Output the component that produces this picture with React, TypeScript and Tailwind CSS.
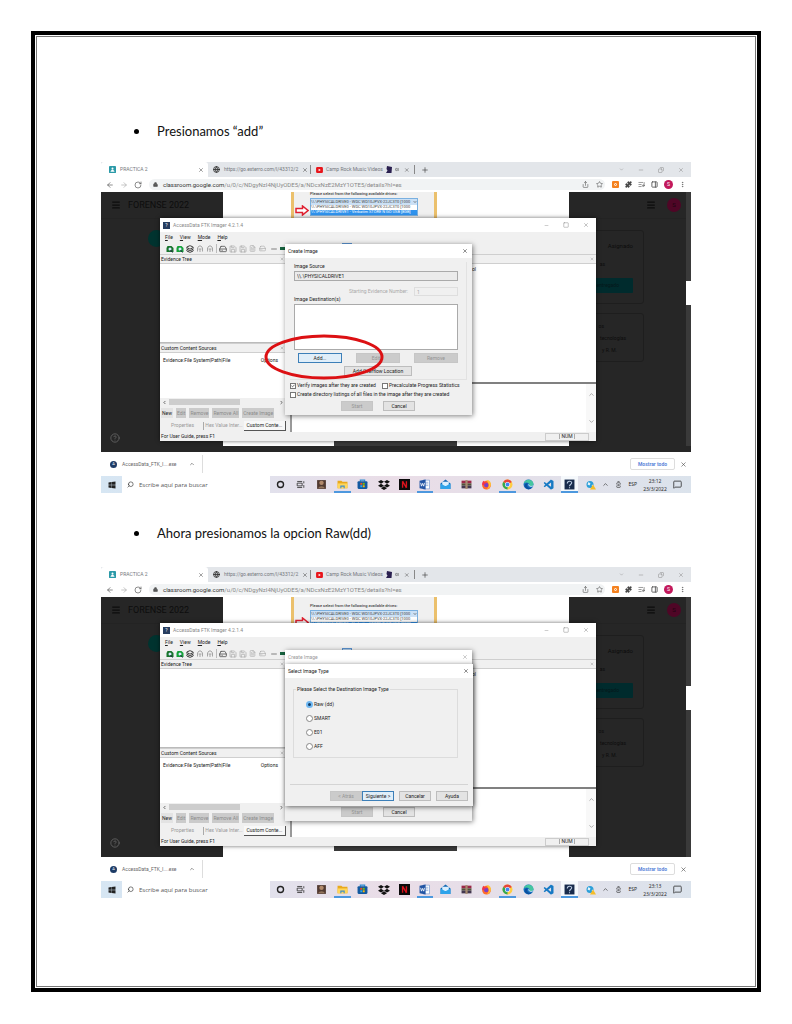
import React, { useId } from 'react';
import {
  ArrowLeft, ArrowRight, BatteryCharging, Check, ChevronDown, ChevronLeft, ChevronRight, ChevronUp,
  CircleHelp, Copy, FileText, Globe, HardDrive, Layers, ListMusic, Lock, Menu, MessageSquare, Minus,
  MoreVertical, PanelRight, Plus, Puzzle, RotateCw, Save, Search, Share, Square, Star, Volume2, X,
} from 'lucide-react';
import { FaDropbox, FaWindows } from 'react-icons/fa';
import { VscVscode } from 'react-icons/vsc';

type StepKind = 'create' | 'type';

function ClassroomIcon() {
  return (
    <svg viewBox="0 0 16 16" className="size-[7px] shrink-0">
      <rect width="16" height="16" rx="1" fill="#2b9aa8" />
      <circle cx="8" cy="6" r="2.3" fill="#fff" />
      <path d="M3.5 13c0-3 2-4 4.500-4s4.500 1 4.500 4z" fill="#fff" />
    </svg>
  );
}

function YoutubeIcon() {
  return (
    <svg viewBox="0 0 16 14" className="h-[6px] w-[7px] shrink-0">
      <rect width="16" height="14" rx="3" fill="#e8151b" />
      <path d="M6 4l5 3-5 3z" fill="#fff" />
    </svg>
  );
}

function ChromeTabs() {
  return (
    <div className="flex h-[15px] items-stretch bg-[#e3e6ea] text-[5px] leading-none text-[#74787d]">
      <div className="flex w-[107px] items-center gap-[4px] rounded-t-[3px] bg-white pl-[8px] pr-[4px]">
        <ClassroomIcon />
        <span className="flex-1">PRACTICA 2</span>
        <X className="size-[6px] text-[#444]" />
      </div>
      <div className="flex w-[102px] items-center gap-[4px] pl-[5px] pr-[3px]">
        <Globe className="size-[7px] shrink-0 text-[#333]" strokeWidth={3} />
        <span className="flex-1 whitespace-nowrap">https://go.exterro.com/l/43312/2</span>
        <X className="size-[6px] shrink-0 text-[#444]" />
      </div>
      <div className="my-[3px] w-px bg-[#888]" />
      <div className="flex w-[103px] items-center gap-[3px] pl-[5px] pr-[4px]">
        <YoutubeIcon />
        <span className="whitespace-nowrap">Camp Rock Music Videos</span>
        <svg viewBox="0 0 12 14" className="h-[7px] w-[6px] shrink-0">
          <path d="M2 0l10 2-1 12H0l3-5-2-3z" fill="#2a2050" />
        </svg>
        <Volume2 className="ml-auto size-[5px] text-[#333]" />
        <X className="ml-[2px] size-[6px] text-[#444]" />
      </div>
      <div className="my-[3px] w-px bg-[#888]" />
      <Plus className="ml-[6px] size-[8px] self-center text-[#444]" />
      <div className="ml-auto flex items-center gap-[14px] pr-[7px] text-[#8b8b8b]">
        <ChevronDown className="size-[5px]" />
        <Minus className="size-[6px]" />
        <Copy className="size-[6px] -scale-x-100" />
        <X className="size-[6px]" />
      </div>
    </div>
  );
}

function ChromeToolbar() {
  return (
    <div className="flex h-[15px] items-center bg-white px-[5px] text-[#555]">
      <div className="flex w-[43px] items-center gap-[6px]">
        <ArrowLeft className="size-[8px]" />
        <ArrowRight className="size-[8px] text-[#aaa]" />
        <RotateCw className="size-[8px]" />
      </div>
      <div className="flex h-[11px] flex-1 items-center rounded-full bg-[#f1f3f4] pl-[4px] pr-[2px]">
        <Lock className="size-[5px]" fill="currentColor" strokeWidth={3} />
        <span className="ml-[5px] flex-1 whitespace-nowrap text-[6px] leading-none text-[#888]">
          <span className="text-[#333]">classroom.google.com</span>/u/0/c/NDgyNzI4NjUyODE5/a/NDcxNzE2MzY1OTE5/details?hl=es
        </span>
        <Share className="size-[7px]" />
        <Star className="ml-[7px] size-[7px]" />
      </div>
      <div className="flex items-center gap-[6px] pl-[7px]">
        <span className="flex size-[7px] items-center justify-center rounded-[1px] bg-[#f58220]">
          <span className="size-[3px] rounded-full border border-white" />
        </span>
        <Puzzle className="size-[7px]" fill="#444" />
        <ListMusic className="size-[7px]" />
        <PanelRight className="size-[7px]" strokeWidth={3} />
        <span className="flex size-[9px] items-center justify-center rounded-full bg-[#c2185b] text-[5px] leading-none text-white">S</span>
        <MoreVertical className="size-[7px]" />
      </div>
    </div>
  );
}

function DriveSnippet({ scrolled }: { scrolled: boolean }) {
  return (
    <div
      className={
        'ml-[68px] flex w-[146px] flex-col border-x-[3px] border-[#ebc06c] bg-[#f0f0f0] pb-[10px] text-[4px] leading-none text-[#444] ' +
        (scrolled ? 'pt-[7px]' : 'pt-0')
      }
    >
      <p className="pl-[16px] font-medium">Please select from the following available drives:</p>
      <div className="mt-[2px] flex items-end">
        <svg viewBox="0 0 28 22" className="mx-[1px] h-[11px] w-[14px] shrink-0">
          <path d="M2 7h13V2l11 9-11 9v-5H2z" fill="#fff" stroke="#e02030" strokeWidth="3" />
        </svg>
        <div className="flex w-[108px] flex-col whitespace-nowrap border border-[#7ab0e0]">
          <div className="flex h-[6px] items-center justify-between bg-[#cbe0f5]">
            <p>\\.\PHYSICALDRIVE0 - WDC WD10JPVX-22JC3T0 [1000</p>
            <ChevronDown className="size-[4px] shrink-0" strokeWidth={4} />
          </div>
          <p className="h-[5px] bg-white">\\.\PHYSICALDRIVE0 - WDC WD10JPVX-22JC3T0 [1000</p>
          <p className="h-[5px] bg-[#2f93ee] text-white">\\.\PHYSICALDRIVE1 - Verbatim STORE N GO USB [8GB]</p>
        </div>
      </div>
    </div>
  );
}

function ClassroomPage({ kind, children }: { kind: StepKind; children: React.ReactNode }) {
  return (
    <div className="relative h-[260px] overflow-hidden bg-white">
      <div className="flex h-full">
        <div className="flex w-[122px] flex-col bg-[#262626] text-[#0d0d0d]">
          <div className="flex h-[27px] items-center gap-[7px] border-b border-[#232323] pl-[10px]">
            <Menu className="size-[10px]" strokeWidth={3} />
            <span className="text-[9px] leading-none">FORENSE 2022</span>
          </div>
          <span className="ml-[47px] mt-[11px] size-[17px] rounded-full bg-[#00332f]" />
          <CircleHelp className="mb-[9px] ml-[9px] mt-auto size-[10px] text-[#666]" />
        </div>
        <div className="flex flex-1 flex-col justify-between">
          <DriveSnippet scrolled={kind === 'type'} />
          <div className="mb-[6px] ml-[111px] h-[5px] w-[123px] bg-[#3a3a3a]" />
        </div>
        <div className="flex w-[117px] flex-col bg-[#262626] text-[5px] leading-none text-[#0c0c0c]">
          <div className="flex h-[27px] items-center justify-end gap-[11px] border-b border-[#232323] pr-[5px]">
            <Menu className="size-[10px]" strokeWidth={3} />
            <span className="flex size-[14px] items-center justify-center rounded-full bg-[#4f0626] text-[6px] text-[#1d0511]">S</span>
          </div>
          <div className="mr-[42px] mt-[11px] flex h-[74px] flex-col items-end rounded-[3px] border border-[#1e1e1e] pr-[10px] pt-[12px]">
            <span className="text-[6px]">Asignado</span>
            <span className="mr-[28px] mt-[13px]">as</span>
            <span className="mt-[11px] flex h-[15px] w-[60px] items-center justify-end rounded-[1px] bg-[#002b2d] pr-[14px] text-[#051719]">entregado</span>
          </div>
          <div className="mr-[42px] mt-[9px] flex h-[49px] flex-col items-end gap-[7px] rounded-[3px] border border-[#1e1e1e] pr-[17px] pt-[10px]">
            <span className="mr-[22px]">os</span>
            <span>tecnologías</span>
            <span className="mr-[9px]">y R. M.</span>
          </div>
        </div>
        <div className="flex w-[5px] flex-col bg-[#3a3a3a] pt-[89px]">
          <div className="h-[24px] bg-white" />
        </div>
      </div>
      {kind === 'create' && <div className="absolute inset-x-0 bottom-0 h-[6px] bg-[#262626]" />}
      {children}
    </div>
  );
}

function EvidenceTool({ color }: { color: string }) {
  return (
    <svg viewBox="0 0 16 16" className={'size-[8px] ' + color}>
      <path d="M3 2h8l4 4v8H1V6z" fill="currentColor" />
      <circle cx="8" cy="8" r="3" fill="#d8e8ff" />
      <path d="M9 10l4 5" stroke="#224" strokeWidth="2" />
    </svg>
  );
}

function ToolStrip() {
  return (
    <div className="flex h-[11px] items-center gap-[2px] pl-[6px] text-[#a5a5a5]">
      <EvidenceTool color="text-[#18742d]" />
      <EvidenceTool color="text-[#16a13a]" />
      <Layers className="size-[8px] text-[#333]" strokeWidth={3} />
      <svg viewBox="0 0 16 16" className="size-[8px]">
        <path d="M3 13V6l3-4h4l3 4v7M5 8h6M8 8v6" fill="none" stroke="currentColor" strokeWidth="2" />
      </svg>
      <svg viewBox="0 0 16 16" className="size-[8px]">
        <path d="M3 13V6l3-4h4l3 4v7M5 8h6M8 8v6" fill="none" stroke="currentColor" strokeWidth="2" />
      </svg>
      <span className="h-[9px] w-px bg-[#bbb]" />
      <HardDrive className="size-[8px] text-[#333]" />
      <Save className="size-[8px]" />
      <Save className="size-[8px]" />
      <FileText className="size-[7px]" />
      <HardDrive className="ml-px size-[7px]" />
      <Minus className="ml-[2px] size-[8px]" strokeWidth={4} />
      <span className="h-[3px] w-[9px] bg-[#17633f]" />
      <span className="ml-[51px] h-[11px] w-[10px] border border-[#5b93cf] bg-[#b9d5f0]" />
    </div>
  );
}

function PaneHeader({ title }: { title: string }) {
  return (
    <div className="flex h-[10px] shrink-0 items-center justify-between border-y border-[#cfcfcf] bg-[#f0f0f0] pl-px pr-[2px]">
      <span>{title}</span>
      <X className="size-[4px] text-[#777]" />
    </div>
  );
}

const menus = ['File', 'View', 'Mode', 'Help'];
const sourceActions = ['Edit', 'Remove', 'Remove All', 'Create Image'];

function ImagerWindow() {
  return (
    <section className="absolute left-[59px] top-[26px] flex h-[223px] w-[436px] flex-col bg-[#f0f0f0] text-[5px] leading-none text-[#222] shadow-[0_0_4px_rgba(0,0,0,0.6)]">
      <div className="flex h-[14px] shrink-0 items-center bg-white pl-[3px] pr-[7px] text-[#888]">
        <span className="mr-[3px] flex size-[7px] items-center justify-center bg-[#263d5f] text-[5px] text-white">?</span>
        <span className="flex-1">AccessData FTK Imager 4.2.1.4</span>
        <div className="flex items-center gap-[14px] text-[#888]">
          <Minus className="size-[5px]" />
          <Square className="size-[6px]" />
          <X className="size-[6px]" />
        </div>
      </div>
      <nav className="flex h-[11px] shrink-0 items-center gap-[7px] pl-[5px]">
        {menus.map((m) => (
          <button key={m} type="button" className="first-letter:underline">{m}</button>
        ))}
      </nav>
      <ToolStrip />
      <div className="flex min-h-0 flex-1">
        <div className="flex w-[126px] flex-col">
          <PaneHeader title="Evidence Tree" />
          <div className="h-[80px] border-b border-[#bbb] bg-white" />
          <PaneHeader title="Custom Content Sources" />
          <div className="flex h-[45px] justify-between bg-white pl-[3px] pr-[8px] pt-[5px]">
            <span>Evidence:File System|Path|File</span>
            <span>Options</span>
          </div>
          <div className="flex h-[8px] items-center gap-[2px] px-[2px]">
            <ChevronLeft className="size-[5px]" strokeWidth={3} />
            <span className="h-[6px] w-[71px] bg-[#cdcdcd]" />
            <ChevronRight className="ml-auto size-[5px]" strokeWidth={3} />
          </div>
          <div className="flex h-[13px] items-end gap-[3px] pb-px pl-px">
            <button type="button" className="h-[10px] bg-[#e3e3e3] px-[1px]">New</button>
            {sourceActions.map((a) => (
              <button key={a} type="button" disabled className="h-[10px] whitespace-nowrap bg-[#cbcbcb] px-[1px] text-[#8b8b8b]">{a}</button>
            ))}
          </div>
          <div className="flex h-[13px] items-center text-[#999]">
            <button type="button" className="w-[43px] pl-[2px]">Properties</button>
            <button type="button" className="h-[8px] w-[41px] whitespace-nowrap border-l border-[#aaa]">Hex Value Inter...</button>
            <button type="button" className="h-[10px] flex-1 whitespace-nowrap border-b border-r border-[#555] bg-[#f8f8f8] text-[#222]">Custom Conte...</button>
          </div>
        </div>
        <div className="ml-[4px] flex flex-1 flex-col border-l-2 border-[#999]">
          <div className="flex h-[10px] shrink-0 items-center justify-end border-y border-[#cfcfcf] pr-[2px]">
            <X className="size-[4px] text-[#777]" />
          </div>
          <div className="flex-1 bg-white pl-[180px] pt-[3px]">ol</div>
          <div className="h-[2px] bg-[#808080]" />
          <div className="flex h-[48px] justify-end bg-white">
            <div className="flex w-[10px] flex-col items-center justify-between bg-[#f8f8f8] py-[7px] text-[#777]">
              <ChevronUp className="size-[7px]" />
              <ChevronDown className="size-[7px]" />
            </div>
          </div>
        </div>
      </div>
      <div className="flex h-[9px] shrink-0 items-center justify-between pl-px pr-[7px]">
        <span>For User Guide, press F1</span>
        <div className="flex h-[8px] w-[44px] items-center justify-center border border-[#ccc]">
          <span className="border-x border-[#aaa] px-px">NUM</span>
        </div>
      </div>
    </section>
  );
}

function DialogButton({ children, disabled, focus, className = 'w-[32px]' }: { children: React.ReactNode; disabled?: boolean; focus?: boolean; className?: string }) {
  const tone = disabled
    ? 'border-[#c6c6c6] bg-[#cbcbcb] text-[#949494]'
    : focus
      ? 'border-[#3c7fb8] bg-[#e0eef9] text-[#222]'
      : 'border-[#bdbdbd] bg-[#e3e3e3] text-[#222]';
  return (
    <button type="button" disabled={disabled} className={'flex h-[10px] items-center justify-center whitespace-nowrap border leading-none ' + tone + ' ' + className}>
      {children}
    </button>
  );
}

function CheckOption({ label, checked }: { label: string; checked?: boolean }) {
  return (
    <label className="flex h-[7px] items-center gap-px whitespace-nowrap">
      <span className="relative flex">
        <input type="checkbox" defaultChecked={checked} className="peer size-[6px] appearance-none border border-[#777] bg-white" />
        <Check className="pointer-events-none absolute left-px top-px hidden size-[4px] peer-checked:block" strokeWidth={4} />
      </span>
      {label}
    </label>
  );
}

function DialogTitle({ title, muted }: { title: string; muted?: boolean }) {
  return (
    <div className={'flex h-[14px] shrink-0 items-center justify-between bg-white pl-[3px] pr-[4px] ' + (muted ? 'text-[#999]' : 'text-[#222]')}>
      <h2>{title}</h2>
      <X className="size-[6px]" />
    </div>
  );
}

function CreateImageForm() {
  const id = useId();
  return (
    <>
      <div className="mx-[5px] mt-[4px] flex h-[118px] flex-col border-b border-r border-[#e2e2e2] pl-[4px] pr-[8px] pt-[2px]">
        <label htmlFor={id + 'source'} className="h-[7px]">Image Source</label>
        <input id={id + 'source'} readOnly defaultValue="\\.\PHYSICALDRIVE1" className="h-[10px] border border-[#aaa] bg-[#ebebeb] px-[2px]" />
        <div className="mt-[6px] flex items-center justify-end gap-[6px] text-[#aaa]">
          <label htmlFor={id + 'number'}>Starting Evidence Number:</label>
          <input id={id + 'number'} disabled defaultValue="1" className="h-[9px] w-[44px] border border-[#dedede] bg-[#f0f0f0] px-[2px]" />
        </div>
        <h3 className="pt-px">Image Destination(s)</h3>
        <div className="mt-[2px] h-[46px] border border-[#aaa] bg-white" />
        <div className="mt-[3px] flex justify-between pl-[4px]">
          <DialogButton focus className="w-[44px]">Add...</DialogButton>
          <DialogButton disabled className="w-[44px]">Edit...</DialogButton>
          <DialogButton disabled className="w-[44px]">Remove</DialogButton>
        </div>
        <div className="mt-[3px] flex pl-[50px]">
          <DialogButton className="w-[68px]">Add Overflow Location</DialogButton>
        </div>
      </div>
      <div className="mt-[2px] flex flex-col gap-[2px] pl-[5px]">
        <div className="flex gap-[6px]">
          <CheckOption label="Verify images after they are created" checked />
          <CheckOption label="Precalculate Progress Statistics" />
        </div>
        <CheckOption label="Create directory listings of all files in the image after they are created" />
      </div>
    </>
  );
}

function CreateImageDialog({ behind }: { behind?: boolean }) {
  return (
    <section
      className={
        'absolute left-[184px] flex h-[171px] w-[187px] flex-col bg-[#f0f0f0] text-[5px] leading-none text-[#222] shadow-[1px_1px_5px_rgba(0,0,0,0.5)] ' +
        (behind ? 'top-[53px]' : 'top-[52px]')
      }
    >
      <DialogTitle title="Create Image" muted={behind} />
      {!behind && <CreateImageForm />}
      <div className="mb-[4px] mt-auto flex gap-[10px] pl-[56px]">
        <DialogButton disabled>Start</DialogButton>
        <DialogButton>Cancel</DialogButton>
      </div>
    </section>
  );
}

const imageTypes = ['Raw (dd)', 'SMART', 'E01', 'AFF'];

function SelectTypeDialog() {
  return (
    <section className="absolute left-[184px] top-[67px] flex h-[142px] w-[188px] flex-col bg-[#f0f0f0] text-[5px] leading-none text-[#222] shadow-[1px_1px_5px_rgba(0,0,0,0.6)]">
      <DialogTitle title="Select Image Type" />
      <fieldset className="ml-[8px] mr-[15px] mt-[9px] flex h-[71px] flex-col border border-[#dcdcdc] pl-[12px]">
        <legend className="-ml-[10px] px-px">Please Select the Destination Image Type</legend>
        <div className="mt-[9px] flex flex-col gap-[7px]">
          {imageTypes.map((t, i) => (
            <label key={t} className="flex h-[7px] items-center gap-px">
              <input
                type="radio"
                name="image-type"
                defaultChecked={i === 0}
                className="size-[7px] appearance-none rounded-full border border-[#888] bg-white checked:border-2 checked:border-[#6fb8f2] checked:bg-[#123d66]"
              />
              {t}
            </label>
          ))}
        </div>
      </fieldset>
      <div className="mx-[5px] mt-auto flex justify-end border-t border-[#d4d4d4] pb-[5px] pt-[6px]">
        <DialogButton disabled>&lt; Atrás</DialogButton>
        <DialogButton focus>Siguiente &gt;</DialogButton>
        <DialogButton className="ml-[5px] w-[32px]">Cancelar</DialogButton>
        <DialogButton className="ml-[5px] w-[32px]">Ayuda</DialogButton>
      </div>
    </section>
  );
}

function DownloadBar() {
  return (
    <div className="flex h-[24px] items-center bg-white pl-[9px] pr-[4px] text-[5px] leading-none text-[#666]">
      <span className="flex size-[7px] items-center justify-center rounded-full bg-[#1d3b66] text-[4px] text-white">A</span>
      <span className="ml-[5px] whitespace-nowrap">AccessData_FTK_I....exe</span>
      <ChevronUp className="ml-[13px] size-[6px] text-[#333]" />
      <span className="ml-[7px] h-[18px] w-px bg-[#ddd]" />
      <button type="button" className="ml-auto h-[12px] w-[45px] rounded-[2px] border border-[#ddd] font-bold text-[#5c86da]">Mostrar todo</button>
      <X className="ml-[5px] size-[7px] text-[#444]" />
    </div>
  );
}

function Glyph({ children }: { children: React.ReactNode }) {
  return <svg viewBox="0 0 20 20" className="size-[11px]">{children}</svg>;
}

const taskIcons: { name: string; open?: boolean; active?: boolean; icon: React.ReactNode }[] = [
  { name: 'Cortana', icon: <Glyph><circle cx="10" cy="10" r="5.5" fill="none" stroke="#222" strokeWidth="2.500" /></Glyph> },
  { name: 'Task view', icon: <Glyph><path d="M4 4.500h9M4 15.500h9M4 7.500h9v5H4zM16 4v4M16 11v5" fill="none" stroke="#333" strokeWidth="1.500" /></Glyph> },
  { name: 'Game', icon: <Glyph><rect x="2" y="2" width="16" height="16" fill="#513a31" /><circle cx="10" cy="7" r="4" fill="#b28a6c" /><path d="M4 17c1-5 11-5 12 0z" fill="#92745c" /></Glyph> },
  { name: 'Explorer', open: true, icon: <Glyph><path d="M1 3h7l2 2h9v12H1z" fill="#e9a91c" /><path d="M1 8h18v9H1z" fill="#ffd65a" /><path d="M6 12h8v5h-2v-3H8v3H6z" fill="#3d8ed0" /></Glyph> },
  { name: 'Store', icon: <Glyph><path d="M6 5V2h8v3" fill="none" stroke="#2a89cf" strokeWidth="2" /><rect x="1" y="4" width="18" height="14" rx="2" fill="#1259a0" /><path d="M6 7h3.500v3.500H6z" fill="#f25022" /><path d="M10.500 7H14v3.500h-3.500z" fill="#7fba00" /><path d="M6 11.500h3.500V15H6z" fill="#29a8ee" /><path d="M10.500 11.500H14V15h-3.500z" fill="#ffb900" /></Glyph> },
  { name: 'Dropbox', icon: <FaDropbox className="size-[12px] text-[#111]" /> },
  { name: 'Netflix', icon: <Glyph><rect width="20" height="20" fill="#0a0a0a" /><path d="M6.500 4v12M13.500 4v12M6.500 4l7 12" stroke="#d8121c" strokeWidth="2.500" fill="none" /></Glyph> },
  { name: 'Word', open: true, icon: <Glyph><rect x="8" y="2" width="11" height="16" fill="#fff" stroke="#5b87c9" /><path d="M11 6h6M11 9h6M11 12h6" stroke="#5b87c9" /><path d="M1 3l11-2v18L1 17z" fill="#2255a4" /><path d="M3 7l1.500 6L6.500 8l2 5L10 7" stroke="#fff" fill="none" strokeWidth="1.500" /></Glyph> },
  { name: 'Mail', icon: <Glyph><path d="M1 8l9-7 9 7v10H1z" fill="#1268b4" /><path d="M4 5h12v8H4z" fill="#d9efff" /><path d="M1 8l9 5 9-5v10H1z" fill="#2ea3ea" /></Glyph> },
  { name: 'WinRAR', icon: <Glyph><rect x="1" y="3" width="18" height="5" fill="#9b2947" /><rect x="1" y="8" width="18" height="4" fill="#51543a" /><rect x="1" y="12" width="18" height="5" fill="#443850" /><rect x="8" y="2" width="4" height="16" fill="#a78b70" /></Glyph> },
  { name: 'Firefox', icon: <Glyph><circle cx="10" cy="11" r="8" fill="#ff6a2b" /><path d="M10 3c4-3 9 3 8 8s-5 8-8 8c5-3 6-11 0-16z" fill="#ffc338" /><circle cx="9.500" cy="11" r="4" fill="#7b3fc4" /><path d="M2 10c0-3 1-6 3-7 0 3 3 3 6 4-2 2-5 1-6 5z" fill="#f2344c" /></Glyph> },
  { name: 'Chrome', open: true, icon: <Glyph><circle cx="10" cy="10" r="9" fill="#ffcd40" /><path d="M10 10L2.200 5.500A9 9 0 0 1 17.800 5.500z" fill="#e8453c" /><path d="M10 10L2.200 5.500A9 9 0 0 0 10 19z" fill="#34a853" /><circle cx="10" cy="10" r="4.600" fill="#fff" /><circle cx="10" cy="10" r="3.500" fill="#4285f4" /></Glyph> },
  { name: 'Edge', icon: <Glyph><circle cx="10" cy="10" r="9" fill="#1673c2" /><path d="M1.500 8C3-1 18-1 19 9c0 4-6 5-7 3 1-5-6-7-10.500-4z" fill="#45c6a0" /><path d="M9 8c-3 3-1 8 4 8 2 0 3 0 4-1-6 7-15 2-14-4 1-3 4-4 6-3z" fill="#0c4f9e" /><path d="M10 9c-1 2 1 5 5 5 2 0 3 0 4-2-3 1-9 1-7-1z" fill="#e9f5fb" /></Glyph> },
  { name: 'Code', icon: <VscVscode className="size-[12px] text-[#1679c4]" /> },
  { name: 'Imager', open: true, active: true, icon: <Glyph><rect x="1" y="1" width="18" height="18" fill="#182b4c" /><path d="M6 8c0-5 8-5 8-1 0 3-4 3-4 6M10 15v2" stroke="#b9cae0" strokeWidth="2" fill="none" /></Glyph> },
];

function Taskbar({ time }: { time: string }) {
  return (
    <div className="flex h-[17px] items-stretch bg-linear-to-r from-[#d6e6f3] via-[#eadde7] to-[#dbe3ec] text-[#222]">
      <button type="button" aria-label="Inicio" className="flex w-[21px] items-center justify-center">
        <FaWindows className="size-[8px]" />
      </button>
      <label className="flex w-[148px] items-center gap-[5px] bg-white pl-[5px]">
        <Search className="size-[7px] -scale-x-100" />
        <input type="text" placeholder="Escribe aquí para buscar" className="min-w-0 flex-1 text-[6px] leading-none outline-none placeholder:text-[#555]" />
      </label>
      <div className="grid w-[310px] grid-cols-[repeat(15,1fr)]">
        {taskIcons.map((t) => (
          <button
            key={t.name}
            type="button"
            aria-label={t.name}
            className={
              'mx-[2px] flex items-center justify-center border-b-2 pt-[2px] ' +
              (t.open ? 'border-[#4d98de] ' : 'border-transparent ') +
              (t.active ? 'bg-[#f5f8fb]' : '')
            }
          >
            {t.icon}
          </button>
        ))}
      </div>
      <div className="flex flex-1 items-center justify-between pl-[6px] pr-[9px] text-[5px] leading-none">
        <svg viewBox="0 0 20 20" className="size-[10px]">
          <circle cx="8" cy="9" r="7" fill="#2b9fd9" />
          <path d="M5 4l4 3-2 4-4-2zM11 11l3-2v4z" fill="#e5f4fb" />
          <path d="M14 9l6 10H8z" fill="#f5bd28" />
        </svg>
        <ChevronUp className="size-[7px]" />
        <BatteryCharging className="size-[7px] -rotate-90" />
        <span>ESP</span>
        <span className="text-center leading-[8px]">{time}<br />23/3/2022</span>
        <MessageSquare className="size-[9px]" />
      </div>
    </div>
  );
}

function Desktop({ kind, time }: { kind: StepKind; time: string }) {
  return (
    <div className="overflow-hidden font-['Open_Sans','Noto_Sans',sans-serif]">
      <div className="font-[Roboto,sans-serif]">
        <ChromeTabs />
        <ChromeToolbar />
        <ClassroomPage kind={kind}>
          <ImagerWindow />
          <CreateImageDialog behind={kind === 'type'} />
          {kind === 'type' && <SelectTypeDialog />}
          {kind === 'create' && (
            <svg viewBox="0 0 120 46" className="pointer-events-none absolute left-[163px] top-[142px] h-[46px] w-[120px]">
              <ellipse cx="60" cy="23" rx="58" ry="21" fill="none" stroke="#dc1013" strokeWidth="3" />
            </svg>
          )}
        </ClassroomPage>
        <DownloadBar />
      </div>
      <Taskbar time={time} />
    </div>
  );
}

function Step({ text, kind, time }: { text: string; kind: StepKind; time: string }) {
  return (
    <li>
      <div className="flex h-[20px] items-center pl-[33px] text-[13px] leading-none text-[#111]">
        <span className="mr-[18px] size-[5px] rounded-full bg-black" />
        <p>{text}</p>
      </div>
      <div className={kind === 'type' ? 'mt-[24px]' : 'mt-[21px]'}>
        <Desktop kind={kind} time={time} />
      </div>
    </li>
  );
}

export default function App() {
  return (
    <div className="bg-white px-[31px] pb-[30px] pt-[31px] font-[Lato,sans-serif]">
      <main className="border-4 border-black p-px">
        <div className="border border-[#777] px-16 pb-[88px] pt-[84px]">
          <ul className="flex flex-col gap-[30px]">
            <Step text="Presionamos “add”" kind="create" time="23:12" />
            <Step text="Ahora presionamos la opcion Raw(dd)" kind="type" time="23:13" />
          </ul>
        </div>
      </main>
    </div>
  );
}
